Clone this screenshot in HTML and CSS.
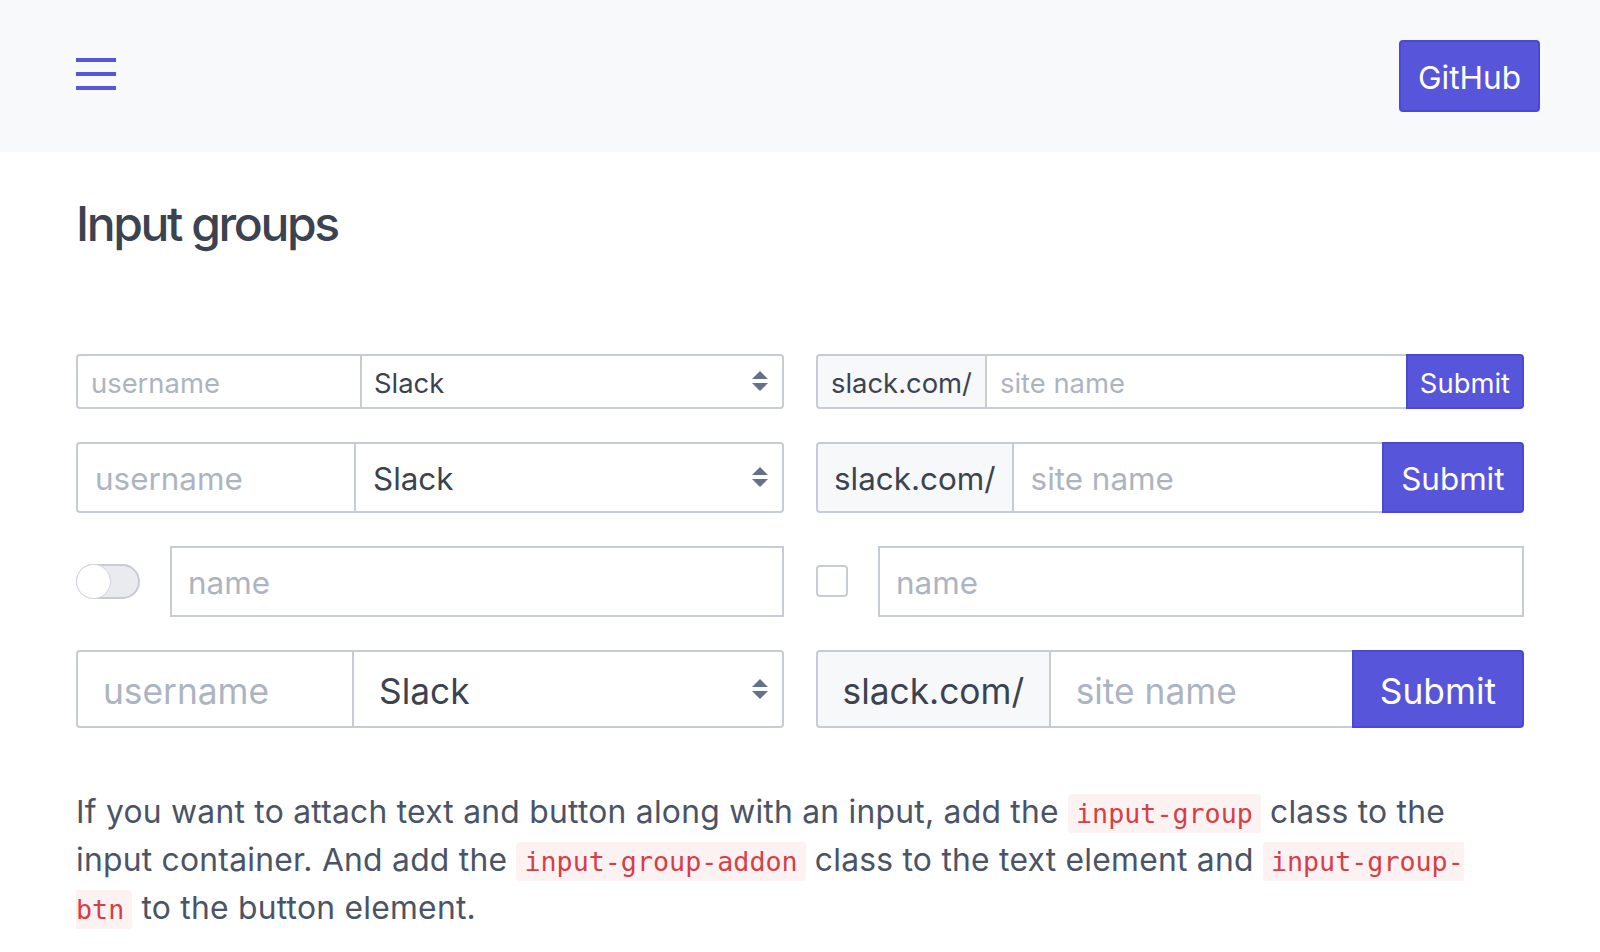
FILE: index.html
```html
<!DOCTYPE html>
<html lang="en">
<head>
<meta charset="utf-8">
<title>Input groups</title>
<link rel="stylesheet" href="styles.css">
</head>
<body>
<header class="navbar">
  <button class="burger" aria-label="Menu"><span></span><span></span><span></span></button>
  <a class="btn-github" href="#">GitHub</a>
</header>
<main class="page">
  <h2 class="title">Input groups</h2>
  <div class="groups">
    <div class="group sm">
      <input class="field user" placeholder="username">
      <div class="select"><span>Slack</span><svg class="caret" viewBox="0 0 4 5"><path d="M2 0L0 2h4zm0 5L0 3h4z"/></svg></div>
    </div>
    <div class="group sm">
      <span class="addon">slack.com/</span>
      <input class="field grow before-btn" placeholder="site name">
      <button class="btn">Submit</button>
    </div>

    <div class="group md">
      <input class="field user" placeholder="username">
      <div class="select"><span>Slack</span><svg class="caret" viewBox="0 0 4 5"><path d="M2 0L0 2h4zm0 5L0 3h4z"/></svg></div>
    </div>
    <div class="group md">
      <span class="addon">slack.com/</span>
      <input class="field grow before-btn" placeholder="site name">
      <button class="btn">Submit</button>
    </div>

    <div class="group md loose">
      <span class="switch"><span class="knob"></span></span>
      <input class="field grow solo" placeholder="name">
    </div>
    <div class="group md loose">
      <span class="check"></span>
      <input class="field grow solo" placeholder="name">
    </div>

    <div class="group lg">
      <input class="field user" placeholder="username">
      <div class="select"><span>Slack</span><svg class="caret" viewBox="0 0 4 5"><path d="M2 0L0 2h4zm0 5L0 3h4z"/></svg></div>
    </div>
    <div class="group lg">
      <span class="addon">slack.com/</span>
      <input class="field grow before-btn" placeholder="site name">
      <button class="btn">Submit</button>
    </div>
  </div>
  <p class="desc">If you want to attach text and button along with an input, add the <code>input-group</code> class to the input container. And add the <code>input-group-addon</code> class to the text element and <code>input-group-btn</code> to the button element.</p>
</main>
</body>
</html>
```
FILE: styles.css
```css
* { box-sizing: border-box; }

html, body {
  margin: 0;
  background: #ffffff;
  font-family: "Inter", "Noto Sans", sans-serif;
  color: #3b4351;
}

.navbar {
  height: 152px;
  background: #f8f9fa;
  display: flex;
  align-items: center;
  justify-content: space-between;
  padding: 0 60px 0 76px;
}

.burger {
  display: flex;
  flex-direction: column;
  gap: 10px;
  width: 40px;
  padding: 0;
  margin: 0 0 4px 0;
  border: 0;
  background: none;
}
.burger span {
  display: block;
  height: 4px;
  width: 40px;
  background: #5755d9;
}

.btn-github {
  display: flex;
  align-items: center;
  height: 72px;
  padding: 3px 17px 0 17px;
  border: 2px solid #4b48d6;
  border-radius: 4px;
  background: #5755d9;
  color: #ffffff;
  font-size: 31.6px;
  text-decoration: none;
}

.page {
  padding: 0 76px;
}

.title {
  margin: 43px 0 0 0;
  font-size: 48px;
  font-weight: 500;
  line-height: 1.2;
  letter-spacing: -0.05em;
  color: #3b4351;
}

.groups {
  margin-top: 101px;
  display: grid;
  grid-template-columns: 1fr 1fr;
  column-gap: 32px;
  row-gap: 33px;
}

.group {
  display: flex;
  align-items: stretch;
}
.group.sm { height: 55px; font-size: 27.4px; }
.group.md { height: 71px; font-size: 31.4px; }
.group.lg { height: 78px; font-size: 35.3px; }
.group.loose { align-items: center; gap: 30px; }

.field, .select, .addon, .btn {
  font: inherit;
  font-size: inherit;
  margin: 0;
  height: 100%;
  border: 2px solid #c6cbd4;
  background: #ffffff;
  color: #3b4351;
  outline: none;
}
.field::placeholder { color: #adb4c1; opacity: 1; }

.sm .field, .sm .select, .sm .addon { padding: 4px 13px 0 13px; }
.md .field, .md .select, .md .addon { padding: 4px 17px 0 17px; }
.lg .field, .lg .select, .lg .addon { padding: 5px 25px 0 25px; }
.md .addon { padding-left: 16px; padding-right: 16px; }
.lg .addon { padding-left: 24.5px; padding-right: 24.5px; }
.md .field.solo { padding-left: 16px; }

.group > :first-child { border-radius: 4px 0 0 4px; }
.group > :last-child { border-radius: 0 4px 4px 0; }
.group > * + * { border-left-width: 0; }
.group.loose > * { border-radius: 4px; border-left-width: 2px; }

.field.user { flex: 0 0 auto; }
.sm .field.user { width: 286px; }
.md .field.user { width: 280px; }
.lg .field.user { width: 278px; }

.field.grow { flex: 1 1 auto; min-width: 0; width: 1%; }
.field.before-btn { border-right-width: 0; }
.field.solo { border-radius: 0; }

.select {
  flex: 1 1 auto;
  display: flex;
  align-items: center;
  justify-content: space-between;
}
.group .select { padding-right: 14px; }
.sm .select { padding-left: 12px; }
.caret {
  width: 16px;
  height: 20px;
  fill: #667189;
  margin-top: -4px;
}
.lg .caret { margin-top: -5px; }

.addon {
  display: flex;
  align-items: center;
  background: #f7f8f9;
  white-space: nowrap;
}

.btn {
  border-color: #4b48d6;
  background: #5755d9;
  color: #ffffff;
  cursor: pointer;
  border-left-width: 2px !important;
}
.sm .btn { padding: 4px 12px 0 12px; }
.md .btn { padding: 4px 17.5px 0 17.5px; }
.lg .btn { padding: 5px 26px 0 26px; }

.switch {
  position: relative;
  flex: 0 0 auto;
  width: 64px;
  height: 35px;
  border: 2px solid #c6cbd4;
  border-radius: 18px !important;
  background: #e9ebef;
}
.knob {
  position: absolute;
  left: -1px;
  top: -1px;
  width: 33px;
  height: 33px;
  border-radius: 50%;
  background: #ffffff;
  box-shadow: 0 0 0 1px #d3d7de;
}

.check {
  flex: 0 0 auto;
  width: 32px;
  height: 32px;
  border: 2px solid #c6cbd4;
  border-radius: 4px !important;
  background: #ffffff;
}

.md.loose .field { height: 71px; }

.desc {
  margin: 60px 0 0 0;
  padding-right: 16px;
  font-size: 31.8px;
  line-height: 48px;
  letter-spacing: 0.25px;
  color: #4a5466;
}
.desc code {
  font-family: "DejaVu Sans Mono", "Liberation Mono", monospace;
  font-size: 26.7px;
  line-height: 1;
  letter-spacing: 0;
  color: #d73e48;
  background: #fcf2f2;
  padding: 4px 8px;
  border-radius: 4px;
}
```
